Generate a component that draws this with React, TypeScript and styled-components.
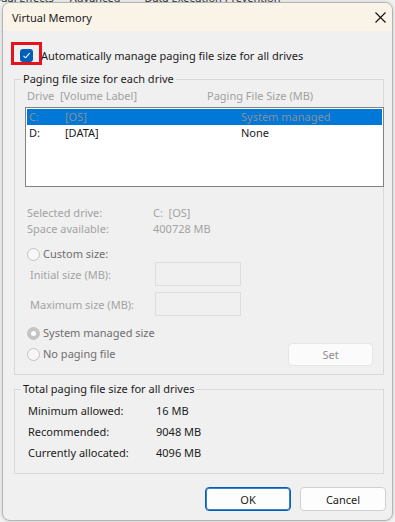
import React from "react";
import styled, { createGlobalStyle } from "styled-components";

const FONT = `"Noto Sans", "Open Sans", sans-serif`;

const GlobalStyle = createGlobalStyle`
  html, body { margin: 0; padding: 0; }
  body {
    background: #f3f3f3;
    font-family: ${FONT};
    font-size: 11px;
    color: #1b1b1b;
    width: 395px;
    height: 522px;
    overflow: hidden;
  }
`;

const Backdrop = styled.div`
  height: 2px;
  overflow: hidden;
  display: flex;
  align-items: flex-end;
  margin-left: -14px;
  white-space: nowrap;
  color: #333;
`;

const BackdropTab = styled.span<{ $gap: number }>`
  line-height: 8px;
  margin-left: ${(p) => p.$gap}px;
`;

const Window = styled.div`
  margin-left: 2px;
  width: 391px;
  height: 519px;
  box-sizing: border-box;
  border: 1px solid #b4b4b4;
  border-radius: 8px;
  background: #f0f0f0;
  overflow: hidden;
  display: flex;
  flex-direction: column;
  box-shadow: 0 0 4px rgba(0, 0, 0, 0.18);
`;

const TitleBar = styled.div`
  height: 28px;
  flex: none;
  background: #faf3e8;
  display: flex;
  align-items: center;
  justify-content: space-between;
  padding-left: 9px;
`;

const Title = styled.span`
  font-size: 11px;
  color: #1a1a1a;
`;

const CloseButton = styled.div`
  width: 24px;
  height: 28px;
  display: flex;
  align-items: center;
  justify-content: center;
`;

const Body = styled.div`
  padding: 0 8px;
  display: flex;
  flex-direction: column;
`;

const CheckRow = styled.div`
  margin-top: 11px;
  display: flex;
  align-items: flex-end;
`;

const RedFrame = styled.span`
  width: 31px;
  height: 23px;
  box-sizing: border-box;
  border: 3px solid #e5131d;
  padding: 4px 0 0 6px;
  display: flex;
  align-items: flex-start;
`;

const CheckBox = styled.span`
  width: 13px;
  height: 13px;
  border-radius: 3px;
  background: #005fb8;
  display: flex;
  align-items: center;
  justify-content: center;
`;

const CheckLabel = styled.span`
  margin-left: -1px;
  margin-bottom: 1px;
  line-height: 16px;
  white-space: nowrap;
`;

const Group = styled.fieldset<{ $top: number }>`
  margin: ${(p) => p.$top}px 0 0 3px;
  padding: 0;
  border: 1px solid #d9d9d9;
  min-width: 0;
`;

const Legend = styled.legend`
  margin-left: 6px;
  padding: 0 2px;
  line-height: 16px;
  color: #1b1b1b;
`;

const GroupBody = styled.div<{ $pad: string }>`
  padding: ${(p) => p.$pad};
  display: flex;
  flex-direction: column;
`;

const HeaderRow = styled.div`
  display: grid;
  grid-template-columns: 33px 147px auto;
  line-height: 16px;
  height: 16px;
  color: #a0a0a0;
  white-space: nowrap;
`;

const ListBox = styled.div`
  margin: 3px -1px 0 -2px;
  height: 80px;
  box-sizing: border-box;
  border: 1px solid #828282;
  background: #ffffff;
  padding: 1px;
`;

const ListRow = styled.div<{ $selected?: boolean }>`
  display: grid;
  grid-template-columns: 36px 176px auto;
  height: 16px;
  line-height: 16px;
  padding-left: 2px;
  white-space: nowrap;
  background: ${(p) => (p.$selected ? "#0078d7" : "transparent")};
  color: ${(p) => (p.$selected ? "#8c8f94" : "#1b1b1b")};
`;

const InfoRow = styled.div<{ $top?: number }>`
  margin-top: ${(p) => p.$top ?? 0}px;
  display: grid;
  grid-template-columns: 126px auto;
  line-height: 16px;
  height: 16px;
  color: #a3a3a3;
  white-space: pre;
`;

const RadioRow = styled.div<{ $top?: number }>`
  margin-top: ${(p) => p.$top ?? 0}px;
  display: flex;
  align-items: center;
  gap: 3px;
  height: 16px;
  line-height: 16px;
  color: #6e6e6e;
  white-space: nowrap;
`;

const Radio = styled.span<{ $checked?: boolean }>`
  width: 13px;
  height: 13px;
  box-sizing: border-box;
  border-radius: 50%;
  border: 1px solid ${(p) => (p.$checked ? "#c4c4c4" : "#c2c2c2")};
  background: ${(p) => (p.$checked ? "#c4c4c4" : "#f7f7f7")};
  display: flex;
  align-items: center;
  justify-content: center;
  flex: none;
  &::after {
    content: "";
    display: ${(p) => (p.$checked ? "block" : "none")};
    width: 5px;
    height: 5px;
    border-radius: 50%;
    background: #ffffff;
  }
`;

const SizeRow = styled.div<{ $top?: number }>`
  margin: ${(p) => p.$top ?? 0}px 0 0 3px;
  display: grid;
  grid-template-columns: 125px 86px;
  align-items: center;
  height: 24px;
  color: #a3a3a3;
  white-space: nowrap;
`;

const SizeInput = styled.div`
  height: 24px;
  box-sizing: border-box;
  border: 1px solid #dedede;
  background: #f0f0f0;
`;

const SetRow = styled.div`
  margin-top: 1px;
  display: flex;
  align-items: center;
  justify-content: space-between;
  height: 24px;
`;

const SetButton = styled.div`
  width: 85px;
  height: 23px;
  margin-right: 10px;
  box-sizing: border-box;
  border: 1px solid #e6e6e6;
  border-radius: 4px;
  background: #fbfbfb;
  color: #8f8f8f;
  display: flex;
  align-items: center;
  justify-content: center;
`;

const TotalsGrid = styled.div`
  display: grid;
  grid-template-columns: 128px auto;
  grid-auto-rows: 16px;
  row-gap: 5px;
  line-height: 16px;
  white-space: nowrap;
`;

const ButtonRow = styled.div`
  margin: 13px -2px 0 0;
  display: flex;
  justify-content: flex-end;
  gap: 9px;
`;

const DialogButton = styled.div<{ $default?: boolean }>`
  width: 86px;
  height: 24px;
  box-sizing: border-box;
  border-radius: 4px;
  background: #fdfdfd;
  border: 1px solid ${(p) => (p.$default ? "#005fb8" : "#d1d1d1")};
  box-shadow: ${(p) => (p.$default ? "inset 0 0 0 1px #3b82c9" : "none")};
  display: flex;
  align-items: center;
  justify-content: center;
  color: #1b1b1b;
`;

const drives = [
  { letter: "C:", label: "[OS]", size: "System managed", selected: true },
  { letter: "D:", label: "[DATA]", size: "None", selected: false },
];

const totals = [
  ["Minimum allowed:", "16 MB"],
  ["Recommended:", "9048 MB"],
  ["Currently allocated:", "4096 MB"],
];

export default function App() {
  return (
    <>
      <GlobalStyle />
      <Backdrop>
        <BackdropTab $gap={0}>Visual Effects</BackdropTab>
        <BackdropTab $gap={16}>Advanced</BackdropTab>
        <BackdropTab $gap={24}>Data Execution Prevention</BackdropTab>
      </Backdrop>
      <Window>
        <TitleBar>
          <Title>Virtual Memory</Title>
          <CloseButton>
            <svg width="11" height="11" viewBox="0 0 11 11">
              <path d="M0.5 0.5 L10.5 10.5 M10.5 0.5 L0.5 10.5" stroke="#111" strokeWidth="1.1" />
            </svg>
          </CloseButton>
        </TitleBar>
        <Body>
          <CheckRow>
            <RedFrame>
              <CheckBox>
                <svg width="9" height="9" viewBox="0 0 9 9">
                  <path d="M1.5 4.8 L3.6 6.8 L7.6 2.2" stroke="#fff" strokeWidth="1.1" fill="none" />
                </svg>
              </CheckBox>
            </RedFrame>
            <CheckLabel>Automatically manage paging file size for all drives</CheckLabel>
          </CheckRow>

          <Group $top={6}>
            <Legend>Paging file size for each drive</Legend>
            <GroupBody $pad="1px 0 8px 12px">
              <HeaderRow>
                <span>Drive</span>
                <span>[Volume Label]</span>
                <span>Paging File Size (MB)</span>
              </HeaderRow>
              <ListBox>
                {drives.map((d) => (
                  <ListRow key={d.letter} $selected={d.selected}>
                    <span>{d.letter}</span>
                    <span>{d.label}</span>
                    <span>{d.size}</span>
                  </ListRow>
                ))}
              </ListBox>
              <InfoRow $top={18}>
                <span>Selected drive:</span>
                <span>C:  [OS]</span>
              </InfoRow>
              <InfoRow>
                <span>Space available:</span>
                <span>400728 MB</span>
              </InfoRow>
              <RadioRow $top={9}>
                <Radio />
                <span>Custom size:</span>
              </RadioRow>
              <SizeRow>
                <span>Initial size (MB):</span>
                <SizeInput />
              </SizeRow>
              <SizeRow $top={6}>
                <span>Maximum size (MB):</span>
                <SizeInput />
              </SizeRow>
              <RadioRow $top={9}>
                <Radio $checked />
                <span>System managed size</span>
              </RadioRow>
              <SetRow>
                <RadioRow>
                  <Radio />
                  <span>No paging file</span>
                </RadioRow>
                <SetButton>Set</SetButton>
              </SetRow>
            </GroupBody>
          </Group>

          <Group $top={6}>
            <Legend>Total paging file size for all drives</Legend>
            <GroupBody $pad="6px 0 12px 13px">
              <TotalsGrid>
                {totals.map(([k, v]) => (
                  <React.Fragment key={k}>
                    <span>{k}</span>
                    <span>{v}</span>
                  </React.Fragment>
                ))}
              </TotalsGrid>
            </GroupBody>
          </Group>

          <ButtonRow>
            <DialogButton $default>OK</DialogButton>
            <DialogButton>Cancel</DialogButton>
          </ButtonRow>
        </Body>
      </Window>
    </>
  );
}
